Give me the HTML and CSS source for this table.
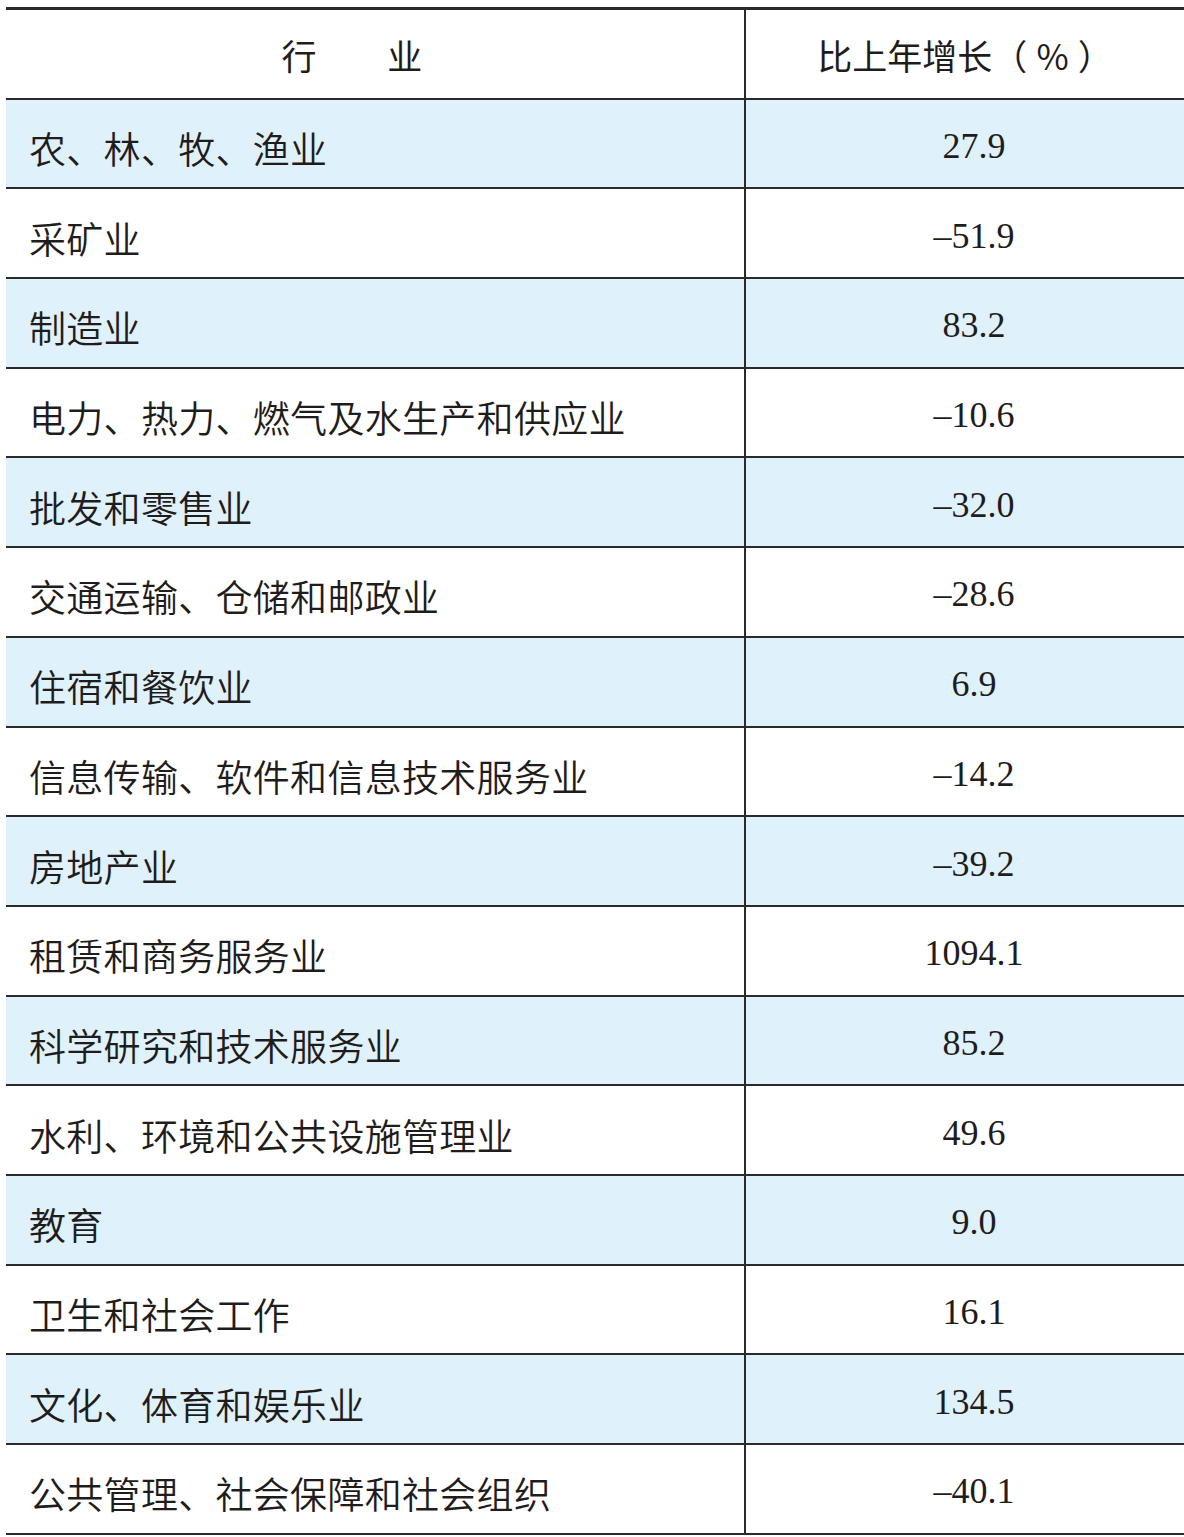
FILE: index.html
```html
<!DOCTYPE html>
<html lang="zh">
<head>
<meta charset="utf-8">
<link rel="stylesheet" href="styles.css">
</head>
<body>
<div class="table">
  <div class="row head">
    <div class="cell name">行　　业</div>
    <div class="cell val">比上年增长（<span class="pct">%</span>）</div>
  </div>
  <div class="row alt"><div class="cell name">农、林、牧、渔业</div><div class="cell val">27.9</div></div>
  <div class="row"><div class="cell name">采矿业</div><div class="cell val">–51.9</div></div>
  <div class="row alt"><div class="cell name">制造业</div><div class="cell val">83.2</div></div>
  <div class="row"><div class="cell name">电力、热力、燃气及水生产和供应业</div><div class="cell val">–10.6</div></div>
  <div class="row alt"><div class="cell name">批发和零售业</div><div class="cell val">–32.0</div></div>
  <div class="row"><div class="cell name">交通运输、仓储和邮政业</div><div class="cell val">–28.6</div></div>
  <div class="row alt"><div class="cell name">住宿和餐饮业</div><div class="cell val">6.9</div></div>
  <div class="row"><div class="cell name">信息传输、软件和信息技术服务业</div><div class="cell val">–14.2</div></div>
  <div class="row alt"><div class="cell name">房地产业</div><div class="cell val">–39.2</div></div>
  <div class="row"><div class="cell name">租赁和商务服务业</div><div class="cell val">1094.1</div></div>
  <div class="row alt"><div class="cell name">科学研究和技术服务业</div><div class="cell val">85.2</div></div>
  <div class="row"><div class="cell name">水利、环境和公共设施管理业</div><div class="cell val">49.6</div></div>
  <div class="row alt"><div class="cell name">教育</div><div class="cell val">9.0</div></div>
  <div class="row"><div class="cell name">卫生和社会工作</div><div class="cell val">16.1</div></div>
  <div class="row alt"><div class="cell name">文化、体育和娱乐业</div><div class="cell val">134.5</div></div>
  <div class="row"><div class="cell name">公共管理、社会保障和社会组织</div><div class="cell val">–40.1</div></div>
</div>
</body>
</html>
```
FILE: styles.css
```css
html, body {
  margin: 0;
  padding: 0;
  background: #ffffff;
}
.table {
  margin: 7px 0 0 6px;
  width: 1178px;
  border-top: 3px solid #2a2a2a;
  color: #1f1c1c;
}
.row {
  display: grid;
  grid-template-columns: 738px 2px 1fr;
  height: 89.7px;
  box-sizing: border-box;
  border-bottom: 2px solid #2a2a2a;
  background: #ffffff;
}
.row.alt {
  background: #dff1fb;
}
.row::before {
  content: "";
  grid-column: 2;
  grid-row: 1;
  background: #2a2a2a;
}
.cell {
  display: flex;
  align-items: center;
  grid-row: 1;
}
.cell.name {
  grid-column: 1;
  padding: 9px 0 0 23px;
  font-family: "Noto Sans CJK SC", sans-serif;
  font-size: 37px;
  font-weight: 350;
  letter-spacing: 0.3px;
}
.cell.val {
  grid-column: 3;
  justify-content: center;
  padding: 5px 0 0 18px;
  font-family: "Liberation Serif", "DejaVu Serif", serif;
  font-size: 36px;
}
.head .cell.name {
  justify-content: center;
  padding: 2px 46px 0 0;
  font-family: "Noto Sans CJK SC", sans-serif;
  font-size: 35px;
  font-weight: 400;
}
.head .cell.val {
  padding: 2px 0 0 0;
  font-family: "Noto Sans CJK SC", sans-serif;
  font-size: 35px;
  font-weight: 400;
}
.pct {
  padding: 0 9px;
}
```
